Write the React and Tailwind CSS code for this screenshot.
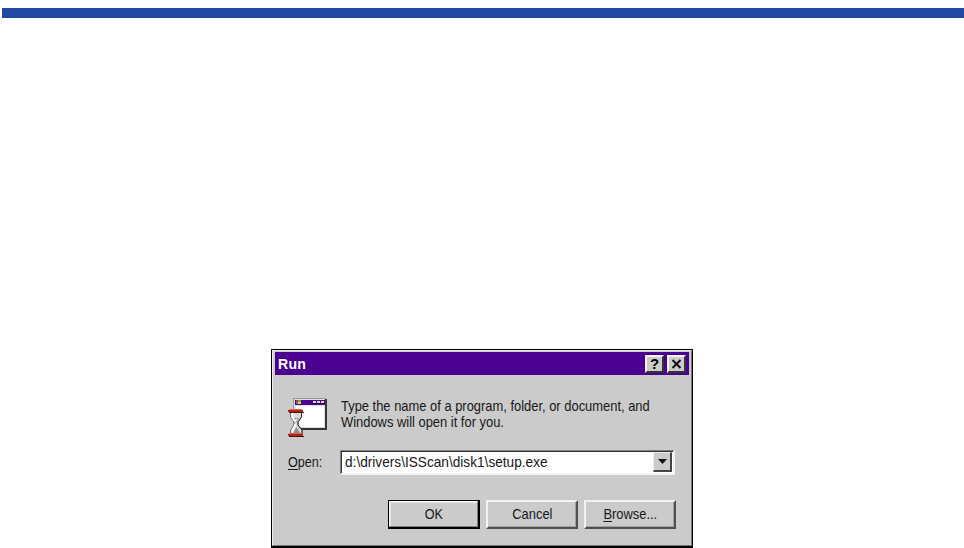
import React from 'react';

function DialogButton({ children, isDefault = false }) {
  if (isDefault) {
    return (
      <button className="h-[29px] w-[92px] border border-b-2 border-r-2 border-black bg-[#cbcbcb]">
        <span className="flex h-full items-center justify-center border border-b-[#808080] border-l-[#f4f4f4] border-r-[#808080] border-t-[#f4f4f4] shadow-[inset_1px_1px_0_#e4e4e4]">
          {children}
        </span>
      </button>
    );
  }
  return (
    <button className="flex h-[29px] w-[92px] items-center justify-center border-b-2 border-l-2 border-r-2 border-t-2 border-b-[#505050] border-l-[#f2f2f2] border-r-[#505050] border-t-[#f2f2f2] bg-[#cbcbcb] shadow-[inset_-1px_-1px_0_#a0a0a0]">
      {children}
    </button>
  );
}

function TitleButton({ label, children }) {
  return (
    <button
      aria-label={label}
      className="flex h-[18px] w-[19px] items-center justify-center border-b-2 border-l-2 border-r-2 border-t-2 border-b-[#343434] border-l-[#f6f6f6] border-r-[#343434] border-t-[#f6f6f6] bg-[#cbcbcb]"
    >
      {children}
    </button>
  );
}

function ProgramIcon() {
  return (
    <svg className="shrink-0" width="40" height="40" viewBox="0 0 40 40" shapeRendering="crispEdges">
      {/* window */}
      <path d="M5 0H38V30H5Z" fill="#999" />
      <path d="M37 1H39V32H8V30H37Z" fill="#333" />
      <path d="M6 1H37V30H6Z" fill="#dedede" />
      <path d="M8 8H36V29H8Z" fill="#fff" />
      <path d="M7 2H37V7H7Z" fill="#4d0094" />
      <path d="M8 2H10V4H8Z" fill="#e32b20" />
      <path d="M10 2H13V4H10Z" fill="#55b947" />
      <path d="M8 4H10V6H8Z" fill="#5268d5" />
      <path d="M10 4H13V6H10Z" fill="#e2d82e" />
      <path d="M25 3H28V6H25ZM29 3H32V6H29ZM33 3H36V6H33Z" fill="#d8d8d8" />
      <path d="M25 5H28V6H25ZM29 5H32V6H29ZM33 5H36V6H33Z" fill="#111" />
      {/* hourglass */}
      <g shapeRendering="auto">
        <path d="M2.5 14H13.5V19L10 24V27L14 32V36H2.5V32L6 27V24L2.5 19Z" fill="#d9d9d9" stroke="#747474" />
        <path d="M13.5 14.5V19L10 24V27L14 32V36" fill="none" stroke="#303030" />
        <path d="M4.5 15V19L7 23" fill="none" stroke="#fff" strokeWidth="2" />
        <path d="M6 20H11L8.5 24ZM8.5 29L12 35H5Z" fill="#8e8e8e" />
        <path d="M7 26V28L4.5 32V35M9 21L7 23" fill="none" stroke="#fff" strokeWidth="1.5" />
      </g>
      <path d="M0 12H15V14H0ZM0 36H15V38H0Z" fill="#b22318" />
      <path d="M1 11H14V12H1ZM1 35H14V36H1Z" fill="#d7644f" />
      <path d="M1 14H16V15H1ZM1 38H16V39H1Z" fill="#3c1613" />
    </svg>
  );
}

export default function App() {
  return (
    <div className="flex h-[548px] w-[964px] flex-col overflow-hidden bg-white font-['Liberation_Sans',Arial,sans-serif] text-[15px] text-[#181818]">
      <div className="ml-[2px] mt-2 h-[10px] shrink-0 bg-[#224aa5]" />

      <div className="ml-[271px] mt-[331px] h-[199px] w-[422px] shrink-0 border border-b-2 border-black bg-[#cbcbcb]">
        <div className="h-full border border-b-[#777] border-l-[#ededed] border-r-[#777] border-t-[#ededed] px-[2px] pt-px">
          {/* Title bar */}
          <div className="flex h-[23px] items-center justify-between bg-[#4b0092] pl-[3px] pr-[3px] text-white">
            <span className="origin-left scale-x-[0.94] text-[15px] font-bold leading-none tracking-[0.3px]">Run</span>
            <div className="flex gap-[3px] text-black">
              <TitleButton label="Help">
                <span className="text-[15px] font-bold leading-none">?</span>
              </TitleButton>
              <TitleButton label="Close">
                <svg width="11" height="10" viewBox="0 0 11 10">
                  <path d="M1.5 1L9.5 9M9.5 1L1.5 9" stroke="#111" strokeWidth="2" />
                </svg>
              </TitleButton>
            </div>
          </div>

          {/* Message */}
          <div className="ml-[13px] mt-[23px] flex h-[40px]">
            <ProgramIcon />
            <p className="ml-[13px] origin-left scale-x-[0.861] whitespace-nowrap leading-[16px]">
              Type the name of a program, folder, or document, and
              <br />
              Windows will open it for you.
            </p>
          </div>

          {/* Path */}
          <div className="ml-[13px] mt-[12px] flex items-center">
            <label className="w-[52px] origin-left scale-x-[0.84]">
              <span className="underline underline-offset-2">O</span>pen:
            </label>
            <div className="flex h-[25px] w-[335px] border border-b-2 border-r-2 border-b-[#f2f2f2] border-l-[#808080] border-r-[#f2f2f2] border-t-[#808080] bg-white">
              <div className="flex min-w-0 flex-1 justify-between border-l border-t border-[#333] pr-px">
                <span className="ml-[3px] origin-left scale-x-[0.91] whitespace-nowrap leading-[20px]">
                  d:\drivers\ISScan\disk1\setup.exe
                </span>
                <button
                  aria-label="Show history"
                  className="flex h-[20px] w-[19px] shrink-0 items-center justify-center border-b-2 border-l border-r-2 border-t border-b-[#444] border-l-[#eee] border-r-[#444] border-t-[#eee] bg-[#cbcbcb]"
                >
                  <svg width="9" height="5" viewBox="0 0 9 5">
                    <path d="M0 0H9L4.5 5Z" fill="#111" />
                  </svg>
                </button>
              </div>
            </div>
          </div>

          {/* Actions */}
          <div className="mr-[13px] mt-[25px] flex justify-end gap-[6px]">
            <DialogButton isDefault>
              <span className="scale-x-[0.84]">OK</span>
            </DialogButton>
            <DialogButton>
              <span className="scale-x-[0.86]">Cancel</span>
            </DialogButton>
            <DialogButton>
              <span className="scale-x-[0.86]">
                <span className="underline underline-offset-2">B</span>rowse...
              </span>
            </DialogButton>
          </div>
        </div>
      </div>
    </div>
  );
}
